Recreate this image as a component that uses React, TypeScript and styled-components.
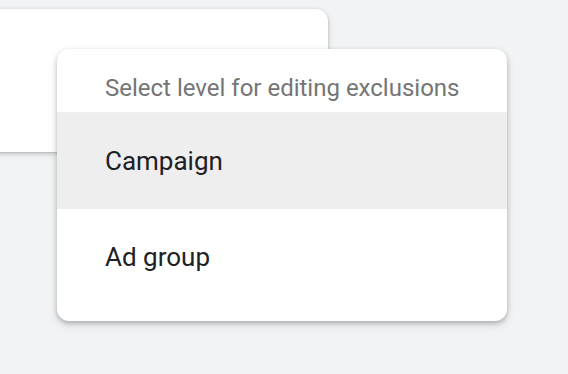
import React from 'react';
import styled, { createGlobalStyle } from 'styled-components';

const GlobalStyle = createGlobalStyle`
  html, body {
    margin: 0;
    padding: 0;
    background: #f1f3f4;
    font-family: Roboto, "Liberation Sans", Arial, sans-serif;
  }
`;

const Page = styled.div`
  position: relative;
  width: 568px;
  height: 374px;
  overflow: hidden;
  padding-top: 9px;
  box-sizing: border-box;
`;

const Card = styled.div`
  margin-left: -24px;
  width: 352px;
  height: 143px;
  background: #fff;
  border-radius: 12px;
  box-shadow: 0 1px 3px rgba(60, 64, 67, 0.3), 0 2px 6px rgba(60, 64, 67, 0.15);
`;

const Menu = styled.div`
  position: absolute;
  left: 57px;
  top: 49px;
  width: 450px;
  padding-bottom: 16px;
  background: #fff;
  border-radius: 12px;
  box-shadow: 0 2px 4px rgba(60, 64, 67, 0.3), 0 4px 10px rgba(60, 64, 67, 0.15);
  overflow: hidden;
`;

const Header = styled.div`
  height: 64px;
  padding: 25px 48px 0;
  box-sizing: border-box;
  font-size: 24px;
  line-height: 28px;
  white-space: nowrap;
  color: #757575;
  border-bottom: 1px solid #f1f1f1;
`;

const Item = styled.div<{ $active?: boolean }>`
  height: 96px;
  padding: 0 48px;
  display: flex;
  align-items: center;
  font-size: 26px;
  color: #202124;
  background: ${(p) => (p.$active ? '#eeeeee' : '#fff')};
`;

const items = ['Campaign', 'Ad group'];

export default function App() {
  return (
    <>
      <GlobalStyle />
      <Page>
        <Card />
        <Menu>
          <Header>Select level for editing exclusions</Header>
          {items.map((label, i) => (
            <Item key={label} $active={i === 0}>
              {label}
            </Item>
          ))}
        </Menu>
      </Page>
    </>
  );
}
